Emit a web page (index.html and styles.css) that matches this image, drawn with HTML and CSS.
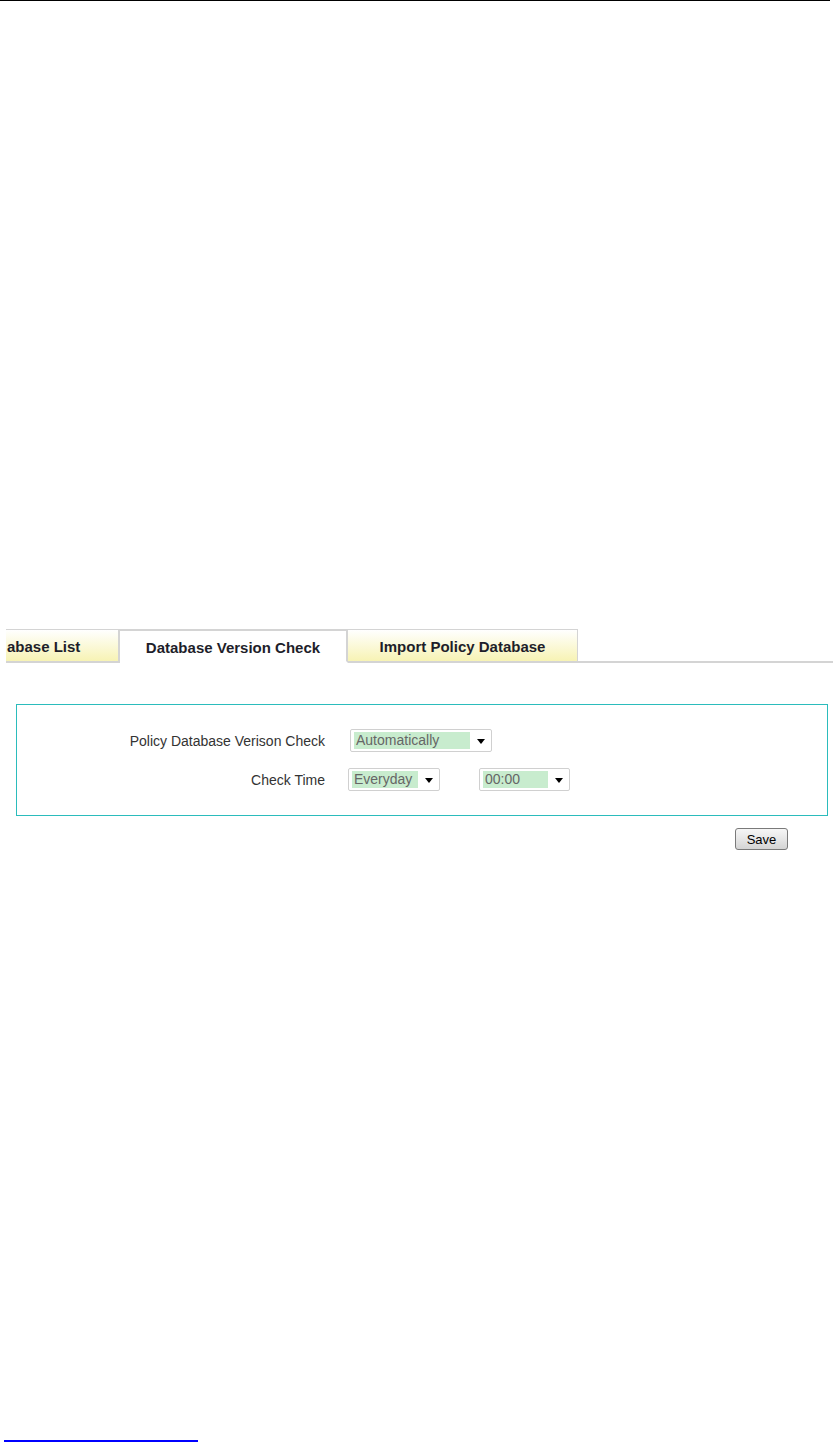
FILE: index.html
```html
<!DOCTYPE html>
<html lang="en">
<head>
  <meta charset="UTF-8">
  <title>Database Version Check</title>
  <link rel="stylesheet" href="styles.css">
</head>
<body>
<div class="page">
  <div class="top-rule"></div>

  <div class="tabs">
    <div class="tab tab-first">abase List</div>
    <div class="tab active">Database Version Check</div>
    <div class="tab">Import Policy Database</div>
    <div class="tab-fill"></div>
  </div>

  <div class="panel">
    <div class="form-grid">
      <label class="label">Policy Database Verison Check</label>
      <div class="controls">
        <div class="select select-wide">
          <span class="value">Automatically</span>
          <span class="arrow"></span>
        </div>
      </div>

      <label class="label">Check Time</label>
      <div class="controls controls-time">
        <div class="select select-day">
          <span class="value">Everyday</span>
          <span class="arrow"></span>
        </div>
        <div class="select select-hour">
          <span class="value">00:00</span>
          <span class="arrow"></span>
        </div>
      </div>
    </div>
  </div>

  <div class="actions">
    <button class="save-btn">Save</button>
  </div>

  <div class="footnote">
    <a href="#" class="footnote-link"></a>
  </div>
</div>
</body>
</html>
```

FILE: styles.css
```css
:root {
  --text-color: #333333;
  --muted-text: #666666;
  --tab-border: #d4d4d4;
  --tab-yellow: #f7f3b4;
  --panel-border: #2bbcbc;
  --select-border: #d0d0d0;
  --select-highlight: #c8ecce;
  --link-color: #0000ff;
}

html, body {
  margin: 0;
  padding: 0;
  background-color: #ffffff;
}

body {
  font-family: "Liberation Sans", Arial, sans-serif;
  color: var(--text-color);
}

.page {
  height: 1442px;
  display: flex;
  flex-direction: column;
  overflow: hidden;
}

.top-rule {
  width: 830px;
  height: 1px;
  background-color: #000000;
}

/* タブ */
.tabs {
  display: flex;
  align-items: stretch;
  margin-top: 628px;
  margin-left: 6px;
  height: 34px;
}

.tab {
  box-sizing: border-box;
  padding: 2px 0 0 0;
  display: flex;
  align-items: center;
  justify-content: center;
  font-size: 15px;
  font-weight: bold;
  color: #1e1e2a;
  white-space: nowrap;
  background: linear-gradient(to bottom, #ffffff 0%, var(--tab-yellow) 100%);
  border: 1px solid var(--tab-border);
  border-bottom: 2px solid var(--tab-border);
}

.tab-first {
  width: 114px;
  justify-content: flex-start;
  padding-left: 1px;
  border-left: none;
  border-right: 2px solid var(--tab-border);
}

.tab.active {
  width: 228px;
  background: #ffffff;
  border-top: 2px solid var(--tab-border);
  border-left: none;
  border-right: 2px solid var(--tab-border);
  border-bottom: 2px solid #ffffff;
}

.tab:nth-child(3) {
  width: 230px;
  border-left: none;
}

.tab-fill {
  flex: 1;
  border-bottom: 2px solid var(--tab-border);
}

/* フォーム枠 */
.panel {
  margin: 41px 0 0 16px;
  width: 812px;
  box-sizing: border-box;
  border: 1px solid var(--panel-border);
  padding: 24px 0 24px 0;
}

.form-grid {
  display: grid;
  grid-template-columns: 308px 1fr;
  column-gap: 24px;
  row-gap: 16px;
  align-items: center;
}

.label {
  text-align: right;
  font-size: 14px;
  color: var(--text-color);
}

.controls {
  display: flex;
  align-items: center;
  margin-left: 1px;
}

.controls-time {
  margin-left: -1px;
  gap: 39px;
}

.select {
  position: relative;
  box-sizing: border-box;
  height: 23px;
  border: 1px solid var(--select-border);
  border-radius: 2px;
  background-color: #ffffff;
  padding: 3px;
  display: flex;
  align-items: center;
}

.select .value {
  display: block;
  height: 17px;
  line-height: 17px;
  padding-left: 2px;
  font-size: 14px;
  color: var(--muted-text);
  background-color: var(--select-highlight);
}

.select .arrow {
  position: absolute;
  right: 6px;
  top: 9px;
  width: 0;
  height: 0;
  border-left: 4px solid transparent;
  border-right: 4px solid transparent;
  border-top: 5px solid #000000;
}

.select-wide {
  width: 142px;
}

.select-wide .value {
  width: 114px;
}

.select-day {
  width: 92px;
}

.select-day .value {
  width: 64px;
}

.select-hour {
  width: 91px;
}

.select-hour .value {
  width: 63px;
}

/* 保存ボタン */
.actions {
  display: flex;
  justify-content: flex-end;
  padding-right: 45px;
  margin-top: 12px;
}

.save-btn {
  width: 53px;
  height: 22px;
  padding: 0;
  font-family: "Liberation Sans", Arial, sans-serif;
  font-size: 13px;
  color: #000000;
  border: 1px solid #7a7a7a;
  border-radius: 3px;
  background: linear-gradient(to bottom, #f6f6f6 0%, #e6e6e6 50%, #d4d4d4 100%);
  cursor: pointer;
}

.footnote {
  margin-top: auto;
  padding-left: 4px;
  height: 2px;
}

.footnote-link {
  display: block;
  width: 194px;
  height: 2px;
  background-color: var(--link-color);
}
```
